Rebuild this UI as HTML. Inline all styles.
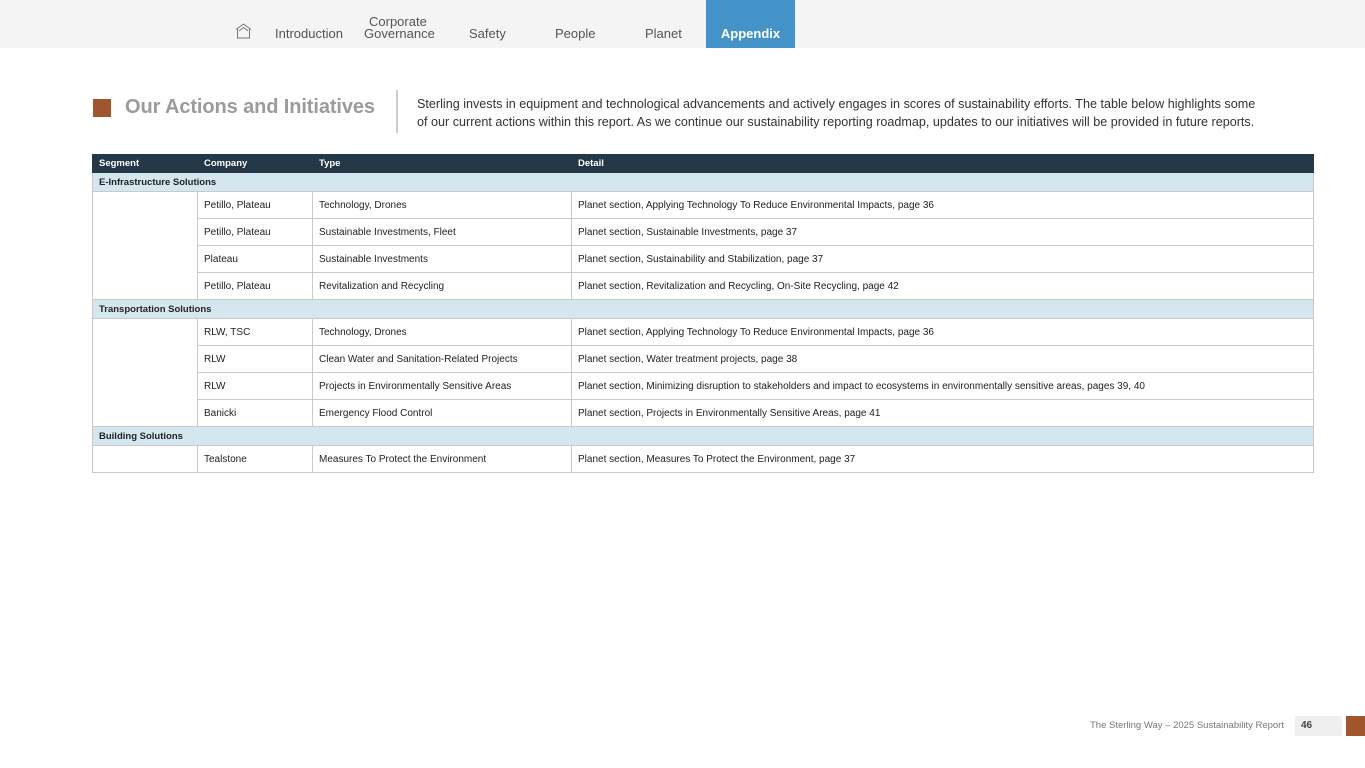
<!DOCTYPE html>
<html><head><meta charset="utf-8"><style>
*{margin:0;padding:0;box-sizing:border-box}
body{width:1365px;height:768px;background:#fff;font-family:"Liberation Sans",sans-serif;position:relative;overflow:hidden;color:#222}
.nav{position:absolute;left:0;top:0;width:1365px;height:48px;background:#f4f4f4}
.nav span{position:absolute;font-size:13px;color:#555;line-height:14px}
.tab{position:absolute;left:706px;top:0;width:89px;height:48px;background:#4392c8;color:#fff;font-weight:bold;font-size:13px;text-align:center;padding-top:26px}
.sq{position:absolute;left:93px;top:99px;width:18px;height:18px;background:#9f5530}
.title{position:absolute;left:125px;top:96px;font-size:20px;font-weight:900;color:#9b9b9b;letter-spacing:-0.1px}
.div{position:absolute;left:396px;top:90px;width:2px;height:43px;background:#ccc}
.para{position:absolute;left:417px;top:95px;font-size:12.6px;line-height:18px;color:#333;width:880px}
table{position:absolute;left:92px;top:154px;width:1222px;border-collapse:collapse;font-size:10px}
td,th{border:1px solid #c9c9c9;padding:0 0 0 6px;text-align:left;color:#222}
th{background:#243746;color:#fff;height:18px;font-weight:900;font-size:9.5px;border-color:#243746}
tr.s td{background:#d4e7ef;height:19px;font-weight:bold;font-size:9.5px;padding-left:6px}
tr.d td{height:27px}
.foot{position:absolute;left:1090px;top:720px;font-size:9.5px;color:#777}
.pg{position:absolute;left:1295px;top:716px;width:47px;height:20px;background:#efefef;font-size:10px;font-weight:bold;color:#444;padding:4px 0 0 6px}
.br{position:absolute;left:1346px;top:716px;width:19px;height:20px;background:#a0562c}
</style></head><body>
<div class="nav">
<svg style="position:absolute;left:235px;top:23px" width="17" height="16" viewBox="0 0 17 16"><path d="M1 6.5 L8.5 1 L16 6.5 M2.5 6 V15 H14.5 V6" fill="none" stroke="#777" stroke-width="1"/><path d="M4 8 L8.5 4.5 L13 8" fill="none" stroke="#777" stroke-width="1"/></svg>
<span style="left:275px;top:27px">Introduction</span>
<span style="left:369px;top:15px">Corporate</span>
<span style="left:364px;top:27px">Governance</span>
<span style="left:469px;top:27px">Safety</span>
<span style="left:555px;top:27px">People</span>
<span style="left:645px;top:27px">Planet</span>
</div>
<div class="tab">Appendix</div>
<div class="sq"></div>
<div class="title">Our Actions and Initiatives</div>
<div class="div"></div>
<div class="para">Sterling invests in equipment and technological advancements and actively engages in scores of sustainability efforts. The table below highlights some<br>of our current actions within this report. As we continue our sustainability reporting roadmap, updates to our initiatives will be provided in future reports.</div>
<table>
<tr><th style="width:105px">Segment</th><th style="width:115px">Company</th><th style="width:259px">Type</th><th>Detail</th></tr>
<tr class="s"><td colspan="4">E-Infrastructure Solutions</td></tr>
<tr class="d"><td rowspan="4"></td><td>Petillo, Plateau</td><td>Technology, Drones</td><td>Planet section, Applying Technology To Reduce Environmental Impacts, page 36</td></tr>
<tr class="d"><td>Petillo, Plateau</td><td>Sustainable Investments, Fleet</td><td>Planet section, Sustainable Investments, page 37</td></tr>
<tr class="d"><td>Plateau</td><td>Sustainable Investments</td><td>Planet section, Sustainability and Stabilization, page 37</td></tr>
<tr class="d"><td>Petillo, Plateau</td><td>Revitalization and Recycling</td><td>Planet section, Revitalization and Recycling, On-Site Recycling, page 42</td></tr>
<tr class="s"><td colspan="4">Transportation Solutions</td></tr>
<tr class="d"><td rowspan="4"></td><td>RLW, TSC</td><td>Technology, Drones</td><td>Planet section, Applying Technology To Reduce Environmental Impacts, page 36</td></tr>
<tr class="d"><td>RLW</td><td>Clean Water and Sanitation-Related Projects</td><td>Planet section, Water treatment projects, page 38</td></tr>
<tr class="d"><td>RLW</td><td>Projects in Environmentally Sensitive Areas</td><td>Planet section, Minimizing disruption to stakeholders and impact to ecosystems in environmentally sensitive areas, pages 39, 40</td></tr>
<tr class="d"><td>Banicki</td><td>Emergency Flood Control</td><td>Planet section, Projects in Environmentally Sensitive Areas, page 41</td></tr>
<tr class="s"><td colspan="4">Building Solutions</td></tr>
<tr class="d"><td></td><td>Tealstone</td><td>Measures To Protect the Environment</td><td>Planet section, Measures To Protect the Environment, page 37</td></tr>
</table>
<div class="foot">The Sterling Way – 2025 Sustainability Report</div>
<div class="pg">46</div>
<div class="br"></div>
</body></html>
